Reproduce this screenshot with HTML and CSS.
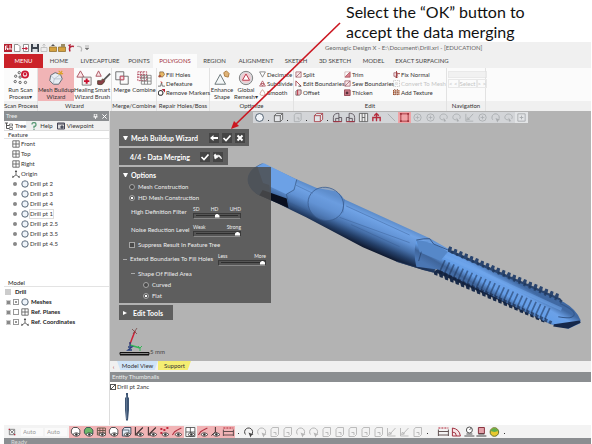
FILE: index.html
```html
<!DOCTYPE html>
<html lang="en">
<head>
<meta charset="utf-8">
<title>Geomagic Design X</title>
<link rel="stylesheet" href="styles.css">
</head>
<body>
<svg class="sprite" aria-hidden="true">
  <symbol id="plane" viewBox="0 0 10 10"><path d="M1 1h8v8H1zM5 1v8M1 5h8" fill="#fff" stroke="#555"/></symbol>
  <symbol id="origin" viewBox="0 0 10 10"><path d="M5 6V1M5 6L1 9M5 6l4 3" fill="none" stroke="#444"/><path d="M3.500 2.500L5 0l1.500 2.500zM0 9.700l1-2.700 1.500 2zM10 9.700L9 7 7.500 9z" fill="#444"/></symbol>
  <symbol id="mesh" viewBox="0 0 10 10"><circle cx="5" cy="5" r="4" fill="#eef4fa" stroke="#345" stroke-width="1"/><path d="M2 3l2-1.500M8 3L6.500 1.500" stroke="#9ab"/></symbol>
  <symbol id="eye" viewBox="0 0 12 12"><path d="M3.500 8.500q3.500-3.500 7 0q-3.500 3.500-7 0z" fill="#fff" stroke="#333" stroke-width=".8"/><circle cx="7" cy="8.500" r="1.200" fill="#333"/></symbol>
  <symbol id="v-mesh" viewBox="0 0 12 12"><path d="M2 7V4l2-2.500h4L10.500 4v4L8 9H4z" fill="#fff" stroke="#444" stroke-width=".9"/><use href="#eye"/></symbol>
  <symbol id="v-region" viewBox="0 0 12 12"><path d="M2 7V4l2-2.500h4L10.500 4v4L8 9H4z" fill="#6cb86a" stroke="#355" stroke-width=".9"/><use href="#eye"/></symbol>
  <symbol id="v-grid" viewBox="0 0 12 12"><path d="M2 2h8v7H2zM2 4.500h8M2 7h8M4.500 2v7M7.500 2v7" fill="none" stroke="#654" stroke-width=".9"/><use href="#eye"/></symbol>
  <symbol id="v-solid" viewBox="0 0 12 12"><path d="M2 4l2-2.500h6.500V8L8.500 10H2z" fill="#dfe9f3" stroke="#345" stroke-width=".9"/><path d="M2 4h6.500v6" fill="none" stroke="#345" stroke-width=".7"/><use href="#eye"/></symbol>
  <symbol id="v-sketch" viewBox="0 0 12 12"><path d="M2 1v8h3M3 8l6.500-6.500" fill="none" stroke="#433" stroke-width="1.100"/><use href="#eye"/></symbol>
  <symbol id="v-pts" viewBox="0 0 12 12"><path d="M2 2h2v2H2zM5 3h2v2H5zM8 1h2v2H8zM2 6h2v2H2z" fill="#c22b3e"/><use href="#eye"/></symbol>
  <symbol id="v-curve" viewBox="0 0 12 12"><path d="M1 9q2-4 5-5l4-2" fill="none" stroke="#b33544" stroke-width="1.100"/><use href="#eye"/></symbol>
  <symbol id="v-axis" viewBox="0 0 12 12"><path d="M6 1v5L2 9.500M6 6l4 3" fill="none" stroke="#433"/><use href="#eye"/></symbol>
  <symbol id="v-plane" viewBox="0 0 12 12"><path d="M1.500 1.500h9v9h-9zM6 1.500v9M1.500 6h9" fill="#fff" stroke="#444" stroke-width=".8"/><use href="#eye"/></symbol>
  <symbol id="dim" viewBox="0 0 12 12"><path d="M1 2h10" stroke="#b22235" stroke-dasharray="2 1"/><path d="M1 3.500v6.500M11 3.500V10M1 5.500h10M1 9h10" fill="none" stroke="#544" stroke-width=".9"/></symbol>
  <symbol id="sel" viewBox="0 0 12 12"><path d="M3 8.500A4 4 0 1 1 8 9.500" fill="none" stroke="currentColor"/><path d="M6 6.500l5 2-2 .8L8 11.500z" fill="currentColor"/></symbol>
  <symbol id="page" viewBox="0 0 12 12"><path d="M2.500 3.500l1.500-2h6v7l-2 2H2.500z" fill="none" stroke="currentColor" stroke-width=".9"/><path d="M5 6.500h2.500v2.500" fill="none" stroke="currentColor" stroke-width=".9"/></symbol>
  <symbol id="brush" viewBox="0 0 12 12"><path d="M2 2v8h8M4.500 8L10 2M3 8.500l3-.5-2-2z" fill="none" stroke="currentColor" stroke-width=".9"/></symbol>
  <symbol id="circ" viewBox="0 0 12 12"><circle cx="6" cy="6" r="4" fill="none" stroke="currentColor" stroke-width=".9"/><path d="M6 4v4M4 6h4" stroke="currentColor" stroke-width=".8"/></symbol>
  <symbol id="lasso" viewBox="0 0 12 12"><path d="M9.500 7.500C12 3 6 1 3.500 3S1.500 9 6 8.500" fill="none" stroke="currentColor" stroke-width=".9"/><path d="M6 6l3 4-1.500 0L6.500 11z" fill="currentColor"/></symbol>
  <symbol id="cube" viewBox="0 0 12 12"><path d="M1.500 4l2.500-2.500h6.500v6.500L8 10.500H1.500zM1.500 4H8v6.500M8 4l2.500-2.500" fill="#e3e5e8" stroke="currentColor" stroke-width=".9"/></symbol>
  <symbol id="view" viewBox="0 0 12 12"><path d="M1.500 10.500V6q0-4 4.500-4.500h1.500v9zM7.500 6h3v4.500h-9M4 10.500V7h3.500" fill="none" stroke="#534a52" stroke-width=".9"/><path d="M1.500 10.500h9" stroke="#b52b3c" stroke-width=".9"/></symbol>
  <symbol id="check" viewBox="0 0 10 10"><path d="M1.500 5L4 7.500 8.500 2.500" fill="none" stroke="#fff" stroke-width="1.700"/></symbol>
  <symbol id="wedge" viewBox="0 0 8 8"><path d="M1 1h6v6H1zM1 7l6-6" fill="#f8e7e9" stroke="#9b5660" stroke-width=".8"/></symbol>
  <symbol id="block" viewBox="0 0 8 8"><path d="M1 2.500L3 1h4v4.500L5 7H1z" fill="#e9c3c8" stroke="#5f4a4e" stroke-width=".8"/><path d="M3 1v6" stroke="#b22638"/></symbol>
</svg>

<header class="caption"><p>Select the “OK” button to<br>accept the data merging</p></header>

<main class="app">
  <div class="titlebar">
    <div class="quick">
      <svg viewBox="0 0 8 8"><path d="M0 0h8v8H0z" fill="#b5202e"/><path d="M1.500 6V2h2M2 4h1.500v2M5 2h2M5 6V4h2v2" fill="none" stroke="#fff" stroke-width=".9"/></svg>
      <svg viewBox="0 0 8 8"><path d="M1.500 .5h3.500l2 2v5H1.500z" fill="#fff" stroke="#777" stroke-width=".8"/></svg>
      <svg viewBox="0 0 8 8"><path d="M1.500 .5h5v7h-5z" fill="#fff" stroke="#777" stroke-width=".8"/><path d="M0 4h3.500V2.500L6 4.500 3.500 6.500V5H0z" fill="#c32340"/></svg>
      <svg viewBox="0 0 8 8"><path d="M0 0h8v8H0z" fill="#3c434c"/><path d="M2 0h4v3H2zM1.500 5h5v3h-5z" fill="#dce0e4"/></svg>
      <svg viewBox="0 0 8 8"><path d="M1 3.500h6v4H1zM4 0v4M2.500 1.500L4 0l1.500 1.500" fill="#eee" stroke="#bbb" stroke-width=".8"/></svg>
      <svg viewBox="0 0 8 8"><path d="M.5 3h7v4.500h-7z" fill="#d4a13f" stroke="#896623" stroke-width=".7"/><path d="M4 0l2 2H2z" fill="#555"/></svg>
      <svg viewBox="0 0 8 8"><path d="M.5 3h7v4.500h-7z" fill="#d4a13f" stroke="#896623" stroke-width=".7"/><path d="M3 0h4v3H3z" fill="#9a8c66"/></svg>
      <svg viewBox="0 0 8 8"><path d="M3 7.500C1 2 5 2 7 2.500" fill="none" stroke="#b5273d" stroke-width="1.500"/><path d="M1 1l3-1-1 4z" fill="#b5273d"/></svg>
      <svg viewBox="0 0 8 8"><path d="M5 7.500C7 3 4 2 1 2.500" fill="none" stroke="#bbb" stroke-width="1.200"/></svg>
      <svg viewBox="0 0 8 8"><path d="M0 2h4M0 4h4L2 6z" fill="#777" stroke="#777" stroke-width=".5"/></svg>
    </div>
    <span class="doc-title">Geomagic Design X - E:\Document\Drill.xrl - [EDUCATION]</span>
  </div>

  <nav class="tabs">
    <button class="menu">MENU</button><button class="t-home">HOME</button><button class="t-live">LIVECAPTURE</button><button class="t-points">POINTS</button><button class="active">POLYGONS</button><button class="t-region">REGION</button><button class="t-align">ALIGNMENT</button><button class="t-sketch">SKETCH</button><button class="t-3d">3D SKETCH</button><button class="t-model">MODEL</button><button class="t-exact">EXACT SURFACING</button>
  </nav>

  <div class="ribbon">
    <section class="group g-scan"><div class="tools">
      <button class="big"><svg viewBox="0 0 18 18"><g fill="#eee" stroke="#555"><circle cx="7" cy="3" r="1.300"/><circle cx="3" cy="7" r="1.300"/><circle cx="8" cy="8" r="1.300"/><circle cx="2.500" cy="13" r="1.300"/><circle cx="8" cy="14" r="1.300"/><circle cx="14" cy="14" r="1.300"/></g><circle cx="13.500" cy="5" r="3.500" fill="#fff" stroke="#cc1733" stroke-width="2"/><path d="M12 3h3v3h-3z" fill="#cc1733"/></svg><span>Run Scan<br>Process▾</span></button>
    </div><h2>Scan Process</h2></section>
    <section class="group g-wizard"><div class="tools">
      <button class="big wide picked"><svg viewBox="0 0 18 18"><path d="M3 6l5-3 6 2 2 5-4 6H6l-4-4z" fill="#e8eef4" stroke="#56616c"/><path d="M3 6l4 4 7-5M7 10l-1 6M7 10l9 0" fill="none" stroke="#aab6c2" stroke-width=".8"/><path d="M12 1l4 4M16 1l-3 4M11 4h6" stroke="#dda22c" stroke-width="1.300"/></svg><span>Mesh Buildup<br>Wizard</span></button>
      <button class="big slim"><svg viewBox="0 0 18 18"><path d="M5 1l4 7H1z" fill="#fae6e8" stroke="#a64a58"/><path d="M7 8h10v9H7z" fill="#f4eeee" stroke="#777"/><path d="M12 9.500v6M9 12.500h6" stroke="#c8102e" stroke-width="2.200"/></svg><span>Healing<br>Wizard</span></button>
      <button class="big thin"><svg viewBox="0 0 18 18"><path d="M4 1l3 6H1z" fill="#fae6e8" stroke="#a64a58"/><path d="M17 4l-7 7" stroke="#555" stroke-width="2"/><path d="M3 12q4 1 6-2l2 2q-2 6-8 4z" fill="#8a4048" stroke="#543"/></svg><span>Smart<br>Brush</span></button>
    </div><h2>Wizard</h2></section>
    <section class="group g-merge"><div class="tools">
      <button class="big slim"><svg viewBox="0 0 18 18"><path d="M2 2h9v9H2z" fill="#f4f6f8" stroke="#666"/><path d="M7 7h9v9H7z" fill="none" stroke="#666"/><path d="M7 7h4v4H7z" fill="#f8dbe0" stroke="#c04358"/></svg><span>Merge</span></button>
      <button class="big mid"><svg viewBox="0 0 18 18"><path d="M2 2h10v10H2zM2 5h10M2 8h10M5 2v10M8 2v10" fill="none" stroke="#b04458" stroke-dasharray="2 1"/><path d="M6 6h11v10H6zM6 9h11M6 12.500h11M9.500 6v10M13 6v10" fill="none" stroke="#777" stroke-width=".9"/></svg><span>Combine</span></button>
    </div><h2>Merge/Combine</h2></section>
    <section class="group g-repair"><div class="tools"><div class="stack">
      <button><svg viewBox="0 0 8 8"><path d="M2 1h4l1.500 3L5 7 2 6z" fill="#e8b865" stroke="#7b5b39" stroke-width=".8"/><circle cx="2" cy="6" r="1.500" fill="#a85039"/></svg>Fill Holes</button>
      <button><svg viewBox="0 0 8 8"><path d="M0 7h3l1-4 1 4h3" fill="none" stroke="#666"/><path d="M3 2l2 1" stroke="#c22"/></svg>Defeature</button>
      <button><svg viewBox="0 0 8 8"><circle cx="3" cy="4.500" r="2.700" fill="#fff" stroke="#333" stroke-width="1.200"/><path d="M4 0h4v4z" fill="#b22138"/></svg>Remove Markers</button>
    </div></div><h2>Repair Holes/Boss</h2></section>
    <section class="group g-opt"><div class="tools">
      <button class="big mid"><svg viewBox="0 0 18 18"><path d="M7 5l6 11H1z" fill="#f4f7f8" stroke="#5d6a6c"/><path d="M11 3l3-2 3 3-1 4-4-1z" fill="#dfb377" stroke="#a9783c"/></svg><span>Enhance<br>Shape</span></button>
      <button class="big mid"><svg viewBox="0 0 18 18"><circle cx="9" cy="9" r="7.500" fill="#d9dade" stroke="#777"/><circle cx="9" cy="9" r="5.500" fill="#f2ccd1"/><path d="M9 4.500l4 7H5z" fill="#fff" stroke="#b3283d"/></svg><span>Global<br>Remesh▾</span></button>
      <div class="stack">
      <button><svg viewBox="0 0 8 8"><path d="M.7 1h6.600L4 7z" fill="#fff" stroke="#666" stroke-width=".8"/></svg>Decimate</button>
      <button><svg viewBox="0 0 8 8"><path d="M4 1l3.300 6H.7zM4 7L2.300 4h3.400z" fill="#fff" stroke="#a3404c" stroke-width=".8"/></svg>Subdivide</button>
      <button><svg viewBox="0 0 8 8"><path d="M4 .7q5 6 1 6.600H3Q-1 6.700 4 .7z" fill="#fff" stroke="#c08c7c" stroke-width=".8"/></svg>Smooth</button>
      </div>
    </div><h2>Optimize</h2></section>
    <section class="group g-edit"><div class="tools">
      <div class="stack col">
      <button><svg><use href="#wedge"/></svg>Split</button>
      <button><svg viewBox="0 0 8 8"><path d="M1 7V1M1 1l6 6" fill="none" stroke="#a3404c"/><path d="M4 7h3" stroke="#333"/></svg>Edit Boundaries</button>
      <button><svg><use href="#block"/></svg>Offset</button></div>
      <div class="stack col">
      <button><svg viewBox="0 0 8 8"><path d="M1 7h6V1z" fill="#d98591" stroke="#a3404c" stroke-width=".8"/><path d="M1 7V1h6" fill="none" stroke="#caa" stroke-width=".8"/></svg>Trim</button>
      <button><svg><use href="#wedge"/></svg>Sew Boundaries</button>
      <button><svg viewBox="0 0 8 8"><path d="M.5 1h6.500v6.500H.5z" fill="#d2808c" stroke="#8e3d4a"/><path d="M2 3h3v3H2z" fill="#59303a"/></svg>Thicken</button></div>
      <div class="stack col">
      <button><svg viewBox="0 0 8 8"><path d="M1 2h4v4H1z" fill="#f3dce0" stroke="#9b5660" stroke-width=".8"/><path d="M4 0v8M2.500 6.500L4 8l1.500-1.500M5 3h3" fill="none" stroke="#933"/></svg>Fix Normal</button>
      <button disabled><svg viewBox="0 0 8 8"><path d="M.5 .5h7v7h-7zM3 3h2v2H3z" fill="none" stroke="#bbb" stroke-dasharray="1 1"/></svg>Convert To Mesh</button>
      <button><svg viewBox="0 0 8 8"><path d="M0 2h8M0 4h8M0 6h8" stroke="#a0522d" stroke-width="1.500" stroke-dasharray="1.500 1"/><path d="M2 0v8M5 0v8" stroke="#6a3326" stroke-dasharray="1 2"/></svg>Add Texture</button></div>
    </div><h2>Edit</h2></section>
    <section class="group g-nav"><div class="tools"><div class="navset">
      <select aria-label="Navigation type" disabled><option></option></select>
      <div class="steps"><button disabled>&lt; &lt;</button><button disabled>Select</button><button disabled>&gt; &gt;</button></div>
    </div></div><h2>Navigation</h2></section>
  </div>

  <div class="workspace">
    <aside class="sidebar">
      <div class="panel-title"><span>Tree</span><span class="marks"><svg viewBox="0 0 6 6"><path d="M1.500 0h3v3.500h-3zM.5 3.500h5M3 3.500V6" fill="none" stroke="#fff"/></svg><svg viewBox="0 0 6 6"><path d="M.5 .5l5 5M5.500 .5l-5 5" stroke="#fff" stroke-width="1.200"/></svg></span></div>
      <div class="subtabs">
        <button class="on"><svg viewBox="0 0 8 8"><path d="M0 1h3M1.500 1v5.500H4M1.500 3.500H4" fill="none" stroke="#555"/><path d="M4.500 2h3v2h-3zM4.500 5.500h3v2h-3z" fill="#fff" stroke="#555" stroke-width=".7"/></svg>Tree</button>
        <button><svg viewBox="0 0 8 8"><path d="M2 2.500q0-2 2-2t2 2-2 2V6" fill="none" stroke="#5d9c79" stroke-width="1.300"/><circle cx="4" cy="7.300" r=".7" fill="#486"/></svg>Help</button>
        <button><svg viewBox="0 0 8 8"><path d="M.5 1h7v6h-7z" fill="#ddd" stroke="#445"/><path d="M1 2h6M4 4h2v2H4z" stroke="#445" fill="#678"/></svg>Viewpoint</button>
      </div>
      <div class="tree">
        <h3>Feature</h3>
        <ul>
          <li><svg><use href="#plane"/></svg>Front</li>
          <li><svg><use href="#plane"/></svg>Top</li>
          <li><svg><use href="#plane"/></svg>Right</li>
          <li><svg><use href="#origin"/></svg>Origin</li>
          <li><i></i><svg><use href="#mesh"/></svg>Drill pt 2</li>
          <li><i></i><svg><use href="#mesh"/></svg>Drill pt 3</li>
          <li><i></i><svg><use href="#mesh"/></svg>Drill pt 4</li>
          <li><i></i><svg><use href="#mesh"/></svg><span class="focus">Drill pt 1</span></li>
          <li><i></i><svg><use href="#mesh"/></svg>Drill pt 2.5</li>
          <li><i></i><svg><use href="#mesh"/></svg>Drill pt 3.5</li>
          <li><i></i><svg><use href="#mesh"/></svg>Drill pt 4.5</li>
        </ul>
      </div>
      <div class="model">
        <h3>Model</h3>
        <ul>
          <li class="root"><b></b>Drill</li>
          <li><em></em><b class="seen"></b><svg><use href="#mesh"/></svg>Meshes</li>
          <li><em></em><b></b><svg><use href="#plane"/></svg>Ref. Planes</li>
          <li><em></em><b class="seen"></b><svg><use href="#origin"/></svg>Ref. Coordinates</li>
        </ul>
      </div>
    </aside>

    <div class="stage">
      <div class="viewport">
        <svg class="drill" viewBox="-357 33 1440 750" preserveAspectRatio="xMidYMid slice">
          <defs>
            <linearGradient id="shaft" gradientUnits="userSpaceOnUse" x1="400" y1="322" x2="356" y2="424">
              <stop offset="0" stop-color="#5a89c6"/><stop offset=".18" stop-color="#70a3e6"/><stop offset=".42" stop-color="#6192d4"/><stop offset=".62" stop-color="#446da6"/><stop offset=".8" stop-color="#243f68"/><stop offset="1" stop-color="#0d1529"/>
            </linearGradient>
            <linearGradient id="thread" gradientUnits="userSpaceOnUse" x1="830" y1="530" x2="786" y2="606">
              <stop offset="0" stop-color="#4069a3"/><stop offset=".25" stop-color="#6ba1e8"/><stop offset=".55" stop-color="#649ee8"/><stop offset=".75" stop-color="#3f659b"/><stop offset="1" stop-color="#4a76b3"/>
            </linearGradient>
          </defs>
          <path d="M100 190C68 202 50 225 57 250Q65 273 90 286L145 310 182 329 230 352 400 442 500 484 580 510 612 517 640 470 658 448 600 415 344 298Q332 278 315 273L262 264 200 237Z" fill="url(#shaft)"/>
          <path d="M84 200L104 190 201 239 190 270 171 283 101 250Z" fill="#6ca1e6"/>
          <path d="M100 190C68 202 50 225 57 250Q65 273 90 286L120 298 120 255 101 249 84 200Z" fill="#526f97"/>
          <path d="M100 270L172 296 177 324 90 286Z" fill="#0a1020"/>
          <path d="M171 283L194 270 202 239M171 283l10 42" fill="none" stroke="#34557f" stroke-width="2"/>
          <ellipse cx="289" cy="312" rx="54" ry="49" transform="rotate(25 289 312)" fill="#6394d5" fill-opacity=".4" stroke="#37598a" stroke-width="2"/>
          <path d="M344 298l-4 40M350 318L540 405M330 352L540 428M200 256L250 280M182 310L236 335M365 374L510 440" fill="none" stroke="#34588c" stroke-opacity=".6" stroke-width="2"/>
          <path d="M655 447l4-8 8 3-2 10 6 2 4-8 8 3-2 10 6 2 4-8 8 3-2 10 6 2 4-8 8 3-2 10 6 2 4-8 8 3-2 10 6 2 4-8 8 3-2 10 6 2 4-8 8 3-2 10 6 2 4-8 8 3-2 10 6 2 4-8 8 3-2 10 6 2 4-8 8 3-2 10 6 2 4-8 8 3-2 10 6 2 4-8 8 3-2 10 6 2 4-8 8 3-2 10 6 2 4-8 8 3-2 10 6 2 4-8 8 3-2 10 6 2 4-8 8 3-2 10 6 2 4-8 8 3-2 10 6 2 4-8 8 3-2 10 6 2 4-8 8 3-2 10 6 2 4-8 8 3-2 10 6 2 4-8 8 3-2 10 6 2l12 20-50 20-300-130z" fill="#2a456f"/>
          <path d="M612 515l2 9 9 3 1-8 4 3 2 9 9 3 1-8 4 3 2 9 9 3 1-8 4 3 2 9 9 3 1-8 4 3 2 9 9 3 1-8 4 3 2 9 9 3 1-8 4 3 2 9 9 3 1-8 4 3 2 9 9 3 1-8 4 3 2 9 9 3 1-8 4 3 2 9 9 3 1-8 4 3 2 9 9 3 1-8 4 3 2 9 9 3 1-8 4 3 2 9 9 3 1-8 4 3 2 9 9 3 1-8 4 3 2 9 9 3 1-8 4 3 2 9 9 3 1-8 4 3 2 9 9 3 1-8 4 3 2 9 9 3 1-8 4 3 2 9 9 3 1-8 4 3 2 9 9 3 1-8 4 3 2 9 9 3 1-8 4 3l30-10-60-50-260-120z" fill="#182a49"/>
          <path d="M560 420Q610 425 655 455L1002 606Q1040 628 1052 660L1050 670 1015 686 962 672 625 508 560 500Q550 460 560 420Z" fill="url(#thread)"/>
          <path d="M560 420Q610 425 655 455L632 482 570 457Z" fill="#5688c9"/>
          <path d="M636 496L960 644" stroke="#1c3155" stroke-width="36" stroke-dasharray="5 10" stroke-opacity=".55"/>
          <path d="M630 515L965 668" stroke="#101c34" stroke-width="10" stroke-dasharray="9 6" stroke-opacity=".55"/>
          <path d="M664 455L1000 606" stroke="#1d3558" stroke-width="9" stroke-dasharray="7 10" stroke-opacity=".7"/>
          <path d="M972 672L1049 661 1052 668 1015 686 970 679Z" fill="#16284a"/>
          <path d="M985 650Q1025 658 1032 645T990 610" fill="none" stroke="#34588c" stroke-width="3"/>
          <path d="M560 420Q585 415 600 416L612 432 655 450M575 455l-8 28M500 484L612 517" fill="none" stroke="#233c64" stroke-width="2"/>
          <path d="M645 468L995 627" stroke="#71a7ec" stroke-width="10" stroke-opacity=".55"/>
        </svg>

        <div class="viewbar">
          <button class="more" aria-label="Mesh display"><svg viewBox="0 0 12 12"><circle cx="6" cy="6" r="4.300" fill="#f3f6fa" stroke="#445566"/></svg></button>
          <button class="more" aria-label="Body display"><svg><use href="#cube"/></svg></button>
          <button class="more off" aria-label="Region display"><svg><use href="#page"/></svg></button>
          <button class="more gap red" aria-label="View"><svg><use href="#cube"/></svg></button>
          <button aria-label="Front view"><svg><use href="#view"/></svg></button>
          <button aria-label="Side view"><svg class="flip"><use href="#view"/></svg></button>
          <button aria-label="Split view"><svg viewBox="0 0 12 12"><path d="M1.500 1.500h9v9h-9zM4.500 1.500v9M7.500 1.500v9M4.500 6h3" fill="#eee" stroke="#555" stroke-width=".9"/></svg></button>
          <button aria-label="Normal to"><svg viewBox="0 0 12 12"><path d="M2 10V6h8v4M6 10V2M3.500 4L6 1.500 8.500 4" fill="none" stroke="#b52b3c" stroke-width="1.500"/></svg></button>
          <button class="gap off" aria-label="Line"><svg viewBox="0 0 12 12"><path d="M2 2l8 8" stroke="currentColor"/></svg></button>
          <button class="picked" aria-label="Rectangle"><svg viewBox="0 0 12 12"><path d="M2 2h8v8H2z" fill="#f0a3a6" stroke="#a3343d"/><path d="M1 1h2v2H1zM9 1h2v2H9zM1 9h2v2H1zM9 9h2v2H9z" fill="#a3343d"/></svg></button>
          <button class="off" aria-label="Circle"><svg><use href="#circ"/></svg></button>
          <button class="off" aria-label="Ellipse"><svg><use href="#circ"/></svg></button>
          <button class="off" aria-label="Polyline"><svg><use href="#lasso"/></svg></button>
          <button class="off" aria-label="Freehand"><svg><use href="#lasso"/></svg></button>
          <button class="off" aria-label="Paint"><svg><use href="#brush"/></svg></button>
          <button class="off" aria-label="Flood"><svg><use href="#circ"/></svg></button>
          <button class="off" aria-label="Extend"><svg><use href="#sel"/></svg></button>
          <button class="off" aria-label="Shrink"><svg><use href="#lasso"/></svg></button>
          <button class="off light" aria-label="Visible only"><svg viewBox="0 0 12 12"><path d="M2 2h8v8H2zM4 6h4M6 4v4" fill="none" stroke="currentColor"/></svg></button>
        </div>

        <div class="wizard">
          <div class="bar b-title"><span class="tri"></span><strong>Mesh Buildup Wizard</strong>
            <button aria-label="Back"><svg viewBox="0 0 10 10"><path d="M1 5l3.500-3v2H9v2H4.500v2z" fill="#fff"/></svg></button>
            <button aria-label="OK"><svg><use href="#check"/></svg></button>
            <button aria-label="Cancel"><svg viewBox="0 0 10 10"><path d="M2.500 2.500l5 5M7.500 2.500l-5 5" stroke="#fff" stroke-width="2"/></svg></button>
          </div>
          <div class="bar b-step"><strong>4/4 - Data Merging</strong>
            <button aria-label="Apply"><svg><use href="#check"/></svg></button>
            <button aria-label="Undo"><svg viewBox="0 0 10 10"><path d="M1 3l1 4 3-2-1-.5q2-1 4.500 2.500Q8 2 3 3.500L2.500 2z" fill="#fff" stroke="#fff" stroke-width=".6"/></svg></button>
          </div>
          <form class="options">
            <h3><span class="tri"></span>Options</h3>
            <label class="row"><input type="radio" name="method">Mesh Construction</label>
            <label class="row"><input type="radio" name="method" checked>HD Mesh Construction</label>
            <div class="row tall"><label for="filter">High Definition Filter</label><div class="slide"><div class="ends"><span>SD</span><span>HD</span><span>UHD</span></div><input id="filter" type="range" min="0" max="2" value="1"></div></div>
            <div class="row tall"><label for="noise">Noise Reduction Level</label><div class="slide"><div class="ends"><span>Weak</span><span>Strong</span></div><input id="noise" type="range" min="0" max="10" value="10"></div></div>
            <label class="row"><input type="checkbox">Suppress Result In Feature Tree</label>
            <div class="row tall far"><label for="extend"><u></u>Extend Boundaries To Fill Holes</label><div class="slide"><div class="ends"><span>Less</span><span>More</span></div><input id="extend" type="range" min="0" max="10" value="10"></div></div>
            <div class="row in1"><u></u>Shape Of Filled Area</div>
            <label class="row in2"><input type="radio" name="shape">Curved</label>
            <label class="row in2"><input type="radio" name="shape" checked>Flat</label>
          </form>
          <div class="bar b-tools"><span class="tri side"></span><strong>Edit Tools</strong></div>
        </div>

        <div class="scale">
          <svg viewBox="0 0 44 28"><path d="M11 16L16 3" stroke="#cf1f35" stroke-width="1.500"/><path d="M13 1l5 5M18 0l-4 6" stroke="#744" stroke-width=".8"/><path d="M11 17l10 3" stroke="#35b557" stroke-width="1.500"/><path d="M19 18l2 2 2-2M21 20v3" fill="none" stroke="#35b557"/><path d="M11 14v4M9 19h4l-4 3h4" fill="none" stroke="#27407e" stroke-width="1.300"/><path d="M1 24.500h29v2H1z" fill="#fff" stroke="#111"/><path d="M1 26.500h29" stroke="#111" stroke-width="2"/></svg><span>5 mm</span>
        </div>
      </div>

      <div class="viewtabs"><span class="prev">‹</span><button class="mv">Model View</button><button class="sup">Support</button></div>
      <div class="panel-title entity">Entity Thumbnails</div>
      <div class="thumbs">
        <label><input type="checkbox" checked>Drill pt 2anc</label>
        <svg viewBox="0 0 6 30"><path d="M2 1h2v4l1 1v12l-1 10-1 1-1-1-1-10V6l1-1z" fill="#3e5573"/><path d="M2.500 3v24" stroke="#7289a8" stroke-width=".6"/></svg>
      </div>
    </div>
  </div>

  <div class="bottombar">
    <svg class="lead" viewBox="0 0 12 12"><path d="M2 2h8v8H2zM2 2l8 8M4 8l5-5" fill="none" stroke="#555"/><path d="M1 1h2v2H1zM9 9h2v2H9z" fill="#b52b3c"/></svg>
    <select aria-label="Mode"><option>Auto</option></select>
    <select aria-label="Filter"><option>Auto</option></select>
    <div class="set vis">
      <svg class="on"><use href="#v-mesh"/></svg><svg class="on"><use href="#v-region"/></svg><svg class="on"><use href="#v-grid"/></svg><svg class="on"><use href="#v-mesh"/></svg><svg class="on"><use href="#v-solid"/></svg><svg class="on"><use href="#v-sketch"/></svg><svg class="on"><use href="#v-sketch"/></svg><svg class="on"><use href="#v-pts"/></svg><svg class="on"><use href="#v-curve"/></svg><svg><use href="#v-plane"/></svg><svg class="on"><use href="#v-curve"/></svg><svg class="on"><use href="#v-axis"/></svg><svg class="on"><use href="#dim"/></svg>
    </div>
    <span class="dot"></span>
    <div class="set pick">
      <svg class="dark"><use href="#sel"/></svg><svg><use href="#sel"/></svg><svg><use href="#page"/></svg><svg><use href="#page"/></svg><svg><use href="#sel"/></svg><svg><use href="#sel"/></svg><svg><use href="#page"/></svg><svg><use href="#page"/></svg><svg><use href="#page"/></svg><svg><use href="#page"/></svg><svg><use href="#page"/></svg><svg><use href="#brush"/></svg><svg><use href="#brush"/></svg><svg><use href="#page"/></svg>
    </div>
    <span class="dot"></span>
    <div class="set measure">
      <svg><use href="#dim"/></svg>
      <svg viewBox="0 0 12 12"><path d="M2 2v8h8Q9 3 2 2zM2 6q4 0 4 4" fill="#f7e3e5" stroke="#a23443"/></svg>
      <svg viewBox="0 0 12 12"><circle cx="6" cy="4" r="3" fill="#fff" stroke="#555"/><path d="M1 10h10M6 4l2-2M3 8h6" stroke="#555"/></svg>
      <svg viewBox="0 0 12 12"><path d="M3 1.500h6v6H3z" fill="#e2a3aa" stroke="#8b3441"/><path d="M1 10h10M3 8h6" stroke="#444"/></svg>
      <svg viewBox="0 0 12 12"><circle cx="6" cy="6" r="4.300" fill="#e8c82e" stroke="#66722f"/><path d="M2 5q4-6 8 0L6 6z" fill="#5fae4c"/></svg>
    </div>
    <span class="dot"></span>
  </div>
  <footer class="status">Ready</footer>
</main>

<svg class="pointer" viewBox="0 0 112 110" aria-hidden="true"><path d="M110 1L6 102" stroke="#cb1620" stroke-width="1.600"/><path d="M1 107l3-8 5 5z" fill="#cb1620"/></svg>
</body>
</html>
```
FILE: styles.css
```css
* { box-sizing: border-box; }
body {
  margin: 0;
  position: relative;
  display: flex;
  flex-direction: column;
  min-height: 100vh;
  background: #fff;
  color: #333;
  font: 6px/8px Lato, "Open Sans", sans-serif;
}
h2, h3, p, ul { margin: 0; padding: 0; font: inherit; list-style: none; }
button, select, input { font: inherit; color: inherit; margin: 0; padding: 0; border: 0; background: none; border-radius: 0; }
button { white-space: nowrap; }
svg { display: block; flex: none; }
select, input { appearance: none; }
.sprite { position: absolute; width: 0; height: 0; }

.caption { height: 42px; flex: none; display: flex; justify-content: flex-end; color: #111; }
.caption p { width: 246px; padding-top: 2px; font-size: 16px; line-height: 20px; }

.app { flex: 1; display: flex; flex-direction: column; margin: 0 1px 0 4px; background: #f0f0f0; }

/* title and ribbon tabs */
.titlebar { height: 12px; display: flex; align-items: center; color: #666; }
.quick { flex: 0 0 321px; display: flex; gap: 1px; }
.quick svg { width: 8px; height: 8px; }
.tabs { height: 14px; display: flex; }
.tabs button { line-height: 14px; text-align: center; color: #444; }
.tabs .menu { width: 39px; background: #cb2229; color: #fff; }
.t-home { width: 32px; }
.t-live { width: 50px; }
.t-points { width: 28px; }
.tabs .active { width: 44px; background: #fbfbfb; color: #a3343d; }
.t-region { width: 35px; }
.t-align { width: 48px; }
.t-sketch { width: 32px; }
.t-3d { width: 46px; }
.t-model { width: 31px; }
.t-exact { width: 66px; }

.ribbon { display: flex; height: 43px; background: #fbfbfb; }
.group { display: flex; flex-direction: column; border-right: 1px solid #e2e2e2; }
.group h2 { height: 10px; line-height: 10px; background: #f0f0f0; text-align: center; white-space: nowrap; }
.ribbon::after { content: ""; flex: 1; margin-top: 33px; background: #f0f0f0; }
.tools { flex: 1; display: flex; }
.g-scan { width: 34px; }
.g-wizard { width: 74px; }
.g-merge { width: 45px; }
.g-repair { width: 53px; }
.g-opt { width: 84px; }
.g-edit { width: 153px; }
.g-nav { width: 39px; }
.big { width: 33px; display: flex; flex-direction: column; align-items: center; justify-content: flex-start; padding-top: 2px; line-height: 7px; text-align: center; }
.big svg { width: 16px; height: 16px; }
.big.wide { width: 36px; }
.big.slim { width: 20px; }
.big.thin { width: 17px; }
.big.mid { width: 24px; }
.picked { background: #f1b4b6; }
.stack { display: flex; flex-direction: column; padding: 2px 0 0 1px; }
.stack.col { width: 49px; }
.stack button { height: 9px; display: flex; align-items: center; gap: 1px; }
.stack svg { width: 7px; height: 7px; }
button:disabled { color: #c4c4c4; }
.navset { flex: 1; padding: 3px 1px; }
.navset select { display: block; width: 100%; height: 7px; border: 1px solid #e2e2e2; background: #eee; }
.steps { display: flex; justify-content: space-between; margin-top: 1px; }
.steps button { height: 9px; line-height: 7px; border: 1px solid #e8e8e8; }

/* side trees */
.workspace { flex: 1; display: flex; }
.sidebar { flex: 0 0 105px; display: flex; flex-direction: column; background: #fff; }
.panel-title { height: 10px; line-height: 10px; padding: 0 2px; background: #8b8e91; color: #eee; display: flex; justify-content: space-between; }
.marks { display: flex; align-items: center; gap: 4px; }
.marks svg { width: 5px; height: 5px; }
.subtabs { display: flex; height: 10px; gap: 4px; padding-left: 1px; background: #f0f0f0; border-bottom: 1px solid #ddd; }
.subtabs button { display: flex; align-items: center; gap: 2px; }
.subtabs svg { width: 8px; height: 8px; }
.subtabs .on { background: #fff; }
.tree { flex: 1; }
.tree h3, .model h3 { height: 8px; padding-left: 4px; border-bottom: 1px solid #e3e3e3; line-height: 7px; }
.tree li { height: 10px; display: flex; align-items: center; gap: 1px; padding-left: 8px; }
.tree li svg, .model li svg { width: 8px; height: 8px; }
.tree i { width: 4px; height: 4px; border-radius: 50%; background: #888; margin: 0 3px 0 1px; }
.focus { outline: 1px solid #ddd; line-height: 8px; }
.model { height: 146px; font-weight: 700; color: #222; }
.model h3 { font-weight: 400; }
.model li { height: 10px; display: flex; align-items: center; gap: 2px; padding-left: 2px; }
.model .root { padding-left: 0; gap: 4px; }
.model em { width: 5px; height: 5px; border: 1px solid #ccc; background: #888; }
.model b { width: 6px; height: 6px; border: 1px solid #999; background: #fff; }
.model .root b { background: #ccc; border-color: #ccc; margin-left: 1px; }
.model .seen { background: #999; outline: 1px solid #fff; outline-offset: -2px; }

/* 3D view */
.stage { flex: 1; min-width: 0; display: flex; flex-direction: column; border-left: 1px solid #ddd; background: #fff; }
.viewport { flex: 1; position: relative; display: flex; flex-direction: column; padding: 18px 0 0 9px; background: #b3b3b3; overflow: hidden; }
.drill { position: absolute; inset: 0; width: 100%; height: 100%; }
.viewbar { position: absolute; top: 1px; left: 143px; height: 11px; display: flex; background: #d3d5d8; color: #555; }
.viewbar button { width: 13px; padding: 0 1px; }
.viewbar svg { width: 11px; height: 11px; }
.viewbar .more { width: 19px; position: relative; }
.viewbar .more::after, .dot { width: 1px; height: 1px; background: #333; }
.viewbar .more::after { content: ""; position: absolute; right: 3px; bottom: 2px; }
.viewbar .gap { margin-left: 2px; }
.viewbar .off { color: #a9acaf; }
.viewbar .red { color: #a3343d; }
.viewbar .light { background: #e2e4e6; }
.viewbar .picked { background: #f0a3a6; }
.flip { transform: scaleX(-1); }

.wizard { position: relative; display: flex; flex-direction: column; align-items: flex-start; gap: 2px; color: #eee; }
.bar { height: 17px; display: flex; align-items: center; gap: 3px; background: #5f5f5f; font-size: 7px; color: #fff; }
.bar button { width: 10px; height: 10px; background: #454545; }
.bar svg { width: 10px; height: 10px; }
.bar strong { flex: 1; white-space: nowrap; }
.b-title { width: 130px; padding: 0 4px; }
.b-step { width: 109px; padding: 0 5px 0 11px; }
.b-tools { width: 54px; height: 15px; padding: 0 4px; gap: 5px; }
.tri { width: 5px; border: solid transparent; border-width: 4px 2px 0; border-top-color: #fff; }
.tri.side { border-width: 2px 0 2px 4px; border-color: transparent transparent transparent #fff; }
.options { width: 152px; padding: 2px 4px; background: rgb(78 78 78 / 84%); }
.options h3 { height: 12px; display: flex; align-items: center; gap: 3px; font-size: 7px; font-weight: 700; color: #fff; }
.row { height: 11px; display: flex; align-items: center; padding-left: 6px; white-space: nowrap; }
.row.tall { height: 18px; padding-left: 8px; }
.row.tall > label { width: 62px; }
.row.far { padding-left: 0; }
.row.far > label { width: 95px; display: flex; align-items: center; }
.row.in1 { padding-left: 8px; }
.row.in2 { padding-left: 20px; }
.row u { width: 4px; height: 1px; background: #aaa; margin-right: 3px; }
.row input[type="radio"], .row input[type="checkbox"] { width: 6px; height: 6px; border: 1px solid #a5a5a5; margin: 0 3px 0 0; background: #4a4a4a; }
.row input[type="radio"] { border-radius: 50%; }
.row input[type="radio"]:checked { background: radial-gradient(#fff 45%, #555 55%); }
.slide { width: 48px; }
.ends { display: flex; justify-content: space-between; height: 7px; line-height: 7px; font-size: 5px; }
.slide input { display: block; width: 48px; height: 6px; border: 1px solid #3a3a3a; border-bottom-color: #888; background: linear-gradient(#2d2d2d, #2d2d2d) center / 42px 1px no-repeat #555; }
.slide input::-webkit-slider-thumb { appearance: none; width: 5px; height: 4px; background: #fff; clip-path: polygon(50% 0, 100% 50%, 100% 100%, 0 100%, 0 50%); }
.scale { position: relative; display: flex; align-items: flex-end; margin-top: 8px; }
.scale svg { width: 44px; height: 28px; }
.scale span { margin-left: -13px; color: #444; }

.viewtabs { height: 11px; display: flex; background: #f0f0f0; line-height: 11px; }
.viewtabs .prev { width: 7px; text-align: center; color: #a33; }
.viewtabs button { padding: 0 4px; height: 9px; line-height: 9px; color: #333; }
.mv { width: 41px; background: #cfe4f8; clip-path: polygon(0 0, 100% 0, 92% 100%, 8% 100%); }
.sup { width: 33px; background: #f4ed72; clip-path: polygon(0 0, 100% 0, 90% 100%, 0 100%); }
.thumbs { height: 43px; padding: 1px 0 0; }
.thumbs label { display: flex; align-items: center; gap: 1px; }
.thumbs input { width: 6px; height: 6px; border: 1px solid #555; background: linear-gradient(135deg, transparent 40%, #555 40%, #555 60%, transparent 60%); }
.thumbs svg { width: 6px; height: 30px; margin: 1px 0 0 14px; }

/* bottom tool strip */
.bottombar { height: 13px; display: flex; align-items: center; background: #f3f3f3; }
.lead { width: 8px; height: 8px; margin: 0 5px 0 4px; }
.bottombar select { width: 22px; height: 8px; margin-right: 2px; padding-left: 2px; color: #999; background: #fafafa; }
.set { display: flex; }
.set svg { flex: 1; min-width: 0; height: 12px; color: #b5b5b5; }
.set .on { background: #f1b4b6; }
.set .dark { color: #444; }
.vis { width: 166px; }
.dot { margin: 4px 3px 0; }
.pick { width: 182px; }
.measure { width: 64px; margin-left: 6px; }
.status { height: 6px; line-height: 8px; padding-left: 7px; background: #8b8e91; color: #ddd; overflow: hidden; }

.pointer { position: absolute; left: 230px; top: 22px; width: 112px; height: 110px; pointer-events: none; }
```
